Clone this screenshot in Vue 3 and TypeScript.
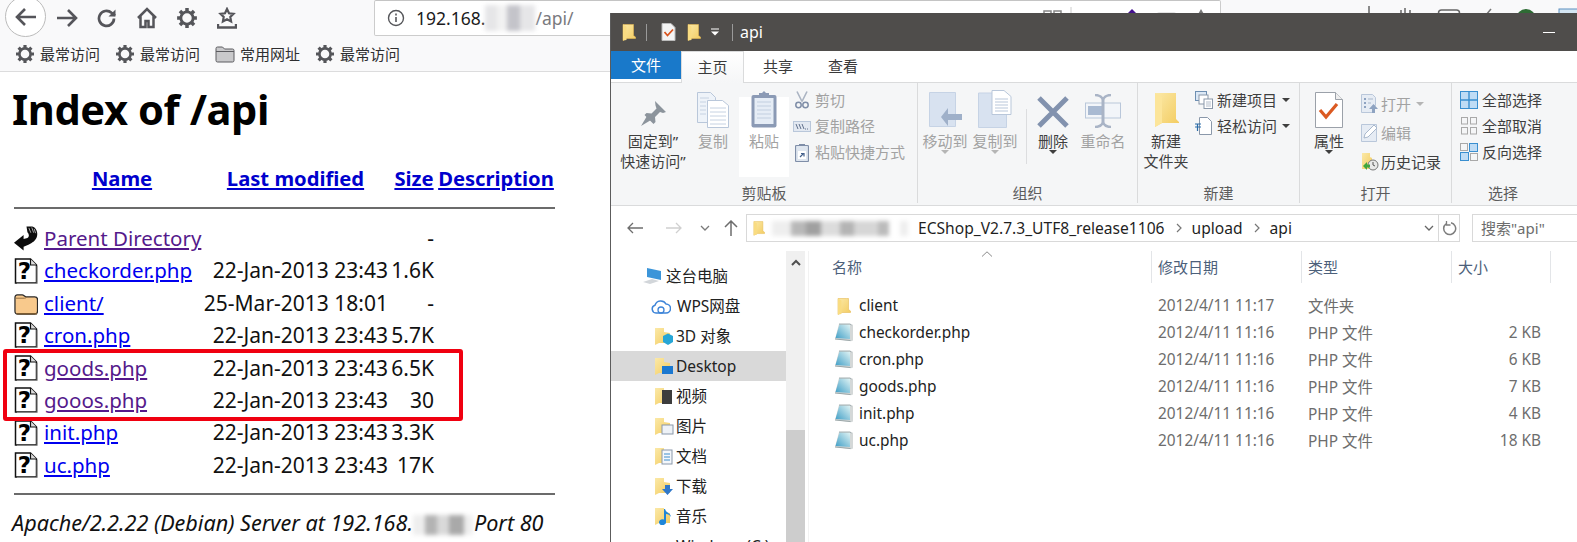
<script setup lang="ts">
interface Row { icon: string; name: string; date: string; size: string; visited?: boolean }
const rows: Row[] = [
  { icon: 'back', name: 'Parent Directory', date: '', size: '-', visited: true },
  { icon: 'unk', name: 'checkorder.php', date: '22-Jan-2013 23:43', size: '1.6K' },
  { icon: 'dir', name: 'client/', date: '25-Mar-2013 18:01', size: '-' },
  { icon: 'unk', name: 'cron.php', date: '22-Jan-2013 23:43', size: '5.7K' },
  { icon: 'unk', name: 'goods.php', date: '22-Jan-2013 23:43', size: '6.5K', visited: true },
  { icon: 'unk', name: 'gooos.php', date: '22-Jan-2013 23:43', size: '30', visited: true },
  { icon: 'unk', name: 'init.php', date: '22-Jan-2013 23:43', size: '3.3K' },
  { icon: 'unk', name: 'uc.php', date: '22-Jan-2013 23:43', size: '17K' },
]
const bookmarks = [
  { icon: 'gear', label: '最常访问' },
  { icon: 'gear', label: '最常访问' },
  { icon: 'bfolder', label: '常用网址' },
  { icon: 'gear', label: '最常访问' },
]
const tree = [
  { label: '这台电脑', kind: 'pc' },
  { label: 'WPS网盘', kind: 'cloud' },
  { label: '3D 对象', kind: 'cube' },
  { label: 'Desktop', kind: 'desk', selected: true },
  { label: '视频', kind: 'film' },
  { label: '图片', kind: 'pic' },
  { label: '文档', kind: 'doc' },
  { label: '下载', kind: 'down' },
  { label: '音乐', kind: 'music' },
  { label: 'Windows (C:)', kind: 'drive' },
]
const files = [
  { name: 'client', date: '2012/4/11 11:17', type: '文件夹', size: '', dir: true },
  { name: 'checkorder.php', date: '2012/4/11 11:16', type: 'PHP 文件', size: '2 KB' },
  { name: 'cron.php', date: '2012/4/11 11:16', type: 'PHP 文件', size: '6 KB' },
  { name: 'goods.php', date: '2012/4/11 11:16', type: 'PHP 文件', size: '7 KB' },
  { name: 'init.php', date: '2012/4/11 11:16', type: 'PHP 文件', size: '4 KB' },
  { name: 'uc.php', date: '2012/4/11 11:16', type: 'PHP 文件', size: '18 KB' },
]
</script>

<template>
  <div class="scene">
    <svg class="defs" width="0" height="0">
      <defs>
        <linearGradient id="gFolder" x1="0" y1="0" x2="1" y2="1">
          <stop offset="0" stop-color="#fbe9a8" />
          <stop offset="1" stop-color="#f3cb5e" />
        </linearGradient>
        <linearGradient id="gPhp" x1="0" y1="1" x2="1" y2="0">
          <stop offset="0" stop-color="#3f9ec6" />
          <stop offset="1" stop-color="#dff3f4" />
        </linearGradient>
        <symbol id="gear" viewBox="0 0 20 20">
          <g stroke="#55565a" stroke-width="3.2" stroke-linecap="butt">
            <path d="M10 1v18M1 10h18M3.6 3.6l12.8 12.8M16.4 3.6L3.6 16.4" />
          </g>
          <circle cx="10" cy="10" r="5.6" fill="#f9f9fa" stroke="#55565a" stroke-width="2.6" />
        </symbol>
        <symbol id="bfolder" viewBox="0 0 20 20">
          <path d="M1 4.5a1.5 1.5 0 0 1 1.5-1.5h5l2 2h8a1.5 1.5 0 0 1 1.5 1.5v10a1.5 1.5 0 0 1-1.5 1.5h-15A1.5 1.5 0 0 1 1 16.500z" fill="#c9c9cb" stroke="#5c5c60" stroke-width="1" />
          <path d="M1 7.500h18" stroke="#5c5c60" stroke-width="1" />
        </symbol>
        <symbol id="unk" viewBox="0 0 23 26">
          <path d="M1 1h15l6 6v18H1z" fill="#fff" stroke="#111" stroke-width="1.500" />
          <path d="M16 1v6h6" fill="#ddd" stroke="#111" stroke-width="1.200" />
          <path d="M2.500 25.500h20V8" fill="none" stroke="#888" stroke-width="1" />
          <text x="10" y="21" text-anchor="middle" class="q">?</text>
        </symbol>
        <symbol id="back" viewBox="0 0 25 26">
          <path d="M13 1l6 0c4 1 6 6 5 10-1 5-5 7-9 9l-5 2v4L0 18l10-8v4l4-1c2-1 2-4 0-6z" fill="#0c0c0c" />
          <path d="M15.500 2.500l2 5M18.500 2l2 5.500M21 3.500l1.500 4.500" stroke="#aaa" stroke-width="1" fill="none" />
        </symbol>
        <symbol id="dir" viewBox="0 0 25 26">
          <path d="M1 7.500c0-2 1-3 2.500-3h5c2 0 2 2 4 2h9c2 0 3 1 3 3v12c0 2-1 3-3 3H4c-2 0-3-1-3-3z" fill="#f8c98c" stroke="#2b2b2b" stroke-width="1.300" />
          <path d="M2 23.500h22v1.500H3z" fill="#7a5a30" />
          <path d="M2 8h9c1 0 2-.5 2-1.500" fill="none" stroke="#8f6a3a" stroke-width="1" />
        </symbol>
        <symbol id="efolder" viewBox="0 0 14 18">
          <path d="M1 1.500h8.500l2 0v11l2 1.500v1.500H4.500L1 17.500z" fill="url(#gFolder)" stroke="#e6bb55" stroke-width=".6" />
          <path d="M1 1.500l3.500 2v13.500l-3.500 .500z" fill="#f9dc82" />
        </symbol>
        <symbol id="php" viewBox="0 0 20 19">
          <path d="M5 1h11l3 .8v15.700l-2 .8L1 16z" fill="#d4d8d8" />
          <path d="M5.500 1.500h10.500l0 14.500L1.500 15z" fill="url(#gPhp)" />
          <path d="M5 1h11l1.500 1" stroke="#8d9ca0" stroke-width=".8" fill="none" />
          <path d="M1 16l15.500 1.500" stroke="#9aa6a8" stroke-width="1" />
        </symbol>
        <symbol id="sel" viewBox="0 0 18 18">
          <rect x=".5" y=".5" width="17" height="17" fill="#bfdcf5" stroke="#3a8fd0" />
          <path d="M9 .5v17M.5 9h17" stroke="#3a8fd0" stroke-width="1.400" />
        </symbol>
        <symbol id="none" viewBox="0 0 18 18">
          <g fill="none" stroke="#a9a9a9"><rect x="1.500" y=".5" width="6" height="6.500" /><rect x="10.500" y=".5" width="6" height="6.500" /><rect x="1.500" y="10.500" width="6" height="6.500" /><rect x="10.500" y="10.500" width="6" height="6.500" /></g>
        </symbol>
        <symbol id="inv" viewBox="0 0 18 18">
          <g fill="none" stroke="#a9a9a9"><rect x=".5" y=".5" width="7" height="7" /><rect x="10.500" y="10.500" width="7" height="7" /></g>
          <g fill="#bfdcf5" stroke="#3a8fd0"><rect x="9.500" y=".5" width="8" height="8" /><rect x=".5" y="9.500" width="8" height="8" /></g>
        </symbol>
      </defs>
    </svg>

    <div class="browser">
      <div class="chrome">
        <div class="navbar">
          <button class="circle" aria-label="back">
            <svg width="22" height="20" viewBox="0 0 22 20"><path d="M21 10H2M10 2l-8 8 8 8" fill="none" stroke="#55555a" stroke-width="2.600" /></svg>
          </button>
          <svg class="tool" width="22" height="20" viewBox="0 0 22 20"><path d="M1 10h19M12 2l8 8-8 8" fill="none" stroke="#55555a" stroke-width="2.600" /></svg>
          <svg class="tool" width="20" height="20" viewBox="0 0 20 20"><path d="M17 10.500a7.500 7.500 0 1 1-2.500-5.700L18 7.500" fill="none" stroke="#55555a" stroke-width="2.700" /><path d="M18.500 1.500v7h-7z" fill="#55555a" /></svg>
          <svg class="tool" width="22" height="22" viewBox="0 0 22 22"><path d="M2 11l9-9 9 9M4.500 9v11h5v-6h3v6h5V9" fill="none" stroke="#55555a" stroke-width="2.500" /></svg>
          <svg class="tool" width="22" height="22"><use href="#gear" /></svg>
          <svg class="tool" width="20" height="22" viewBox="0 0 20 22"><path d="M10 2l2 4.300 4.500.6-3.200 3.100.8 4.500-4.100-2.200-4.100 2.200.8-4.500L3.500 6.900 8 6.300z" fill="none" stroke="#55555a" stroke-width="2.200" /><path d="M1 17v3.500h18V17" fill="none" stroke="#55555a" stroke-width="2.400" /></svg>
          <div class="urlbar">
            <svg width="18" height="18" viewBox="0 0 18 18"><circle cx="9" cy="9" r="7.500" fill="none" stroke="#55565a" stroke-width="1.400" /><path d="M9 8v5M9 4.500v2" stroke="#55565a" stroke-width="1.600" /></svg>
            <span class="addr"><b>192.168.</b><i class="smudge s-url"></i>/api/</span>
            <svg class="tail" width="190" height="36" viewBox="1030 0 190 36"><rect x="1044" y="10" width="7" height="6" fill="none" stroke="#888" stroke-width="1.500" /><rect x="1054" y="10" width="7" height="6" fill="none" stroke="#888" stroke-width="1.500" /><path d="M1071 6v20" stroke="#ccc" /><path d="M1132 8l-7 7h14z" fill="#45128f" /><rect x="1157" y="11" width="19" height="8" rx="2" fill="#e4e4e4" /><path d="M1201 8l-4 7h8z" fill="#777" /></svg>
          </div>
          <svg class="tail2" width="210" height="36" viewBox="1367 0 210 36"><path d="M1368 6v12M1362 12" stroke="#666" stroke-width="1.500" /><path d="M1400 10v6M1404 8v8M1409 10v6" stroke="#666" stroke-width="1.500" /><rect x="1437.500" y="10" width="21" height="14" rx="3" fill="none" stroke="#666" stroke-width="1.500" /><path d="M1490 9l-5 6" stroke="#777" stroke-width="1.500" /><circle cx="1525" cy="19" r="10" fill="#2e6b34" /><rect x="1558" y="9" width="20" height="16" fill="#d5e6f3" stroke="#5d90c0" /></svg>
        </div>
        <div class="bookbar">
          <span v-for="(b, i) in bookmarks" :key="i" class="bm">
            <svg width="20" height="20"><use :href="'#' + b.icon" /></svg>{{ b.label }}
          </span>
        </div>
      </div>

      <div class="page">
        <h1>Index of /api</h1>
        <div class="listing">
          <span></span>
          <a class="th">Name</a>
          <a class="th">Last modified</a>
          <a class="th">Size</a>
          <a class="th">Description</a>
          <hr class="rule" />
          <template v-for="r in rows" :key="r.name">
            <svg class="ficon" width="24" height="26"><use :href="'#' + r.icon" /></svg>
            <span class="cell"><a class="lnk" :class="{ vis: r.visited }">{{ r.name }}</a></span>
            <span class="cell date">{{ r.date }}</span>
            <span class="cell size">{{ r.size }}</span>
            <span></span>
          </template>
          <hr class="rule last" />
        </div>
        <address>Apache/2.2.22 (Debian) Server at 192.168.<i class="smudge s-foot"></i>Port 80</address>
      </div>
      <div class="redbox"></div>
    </div>

    <section class="explorer">
      <header class="titlebar">
        <svg width="14" height="18"><use href="#efolder" /></svg>
        <i class="tsep s1"></i>
        <svg class="t-check" width="15" height="18" viewBox="0 0 15 18"><path d="M1 .5h9l4 4v13H1z" fill="#f4f4f4" stroke="#bbb" /><path d="M3.500 9l3 3.500 5.500-6" fill="none" stroke="#d9541e" stroke-width="1.800" /></svg>
        <svg class="t-f2" width="14" height="18"><use href="#efolder" /></svg>
        <svg class="t-drop" width="8" height="8" viewBox="0 0 8 8"><path d="M0 1h8" stroke="#fff" /><path d="M0 3.500h8L4 7.500z" fill="#fff" /></svg>
        <i class="tsep s2"></i>
        <span class="t-name">api</span>
        <i class="t-min"></i>
      </header>

      <nav class="tabs">
        <span class="tab file">文件</span>
        <span class="tab home">主页</span>
        <span class="tab share">共享</span>
        <span class="tab view">查看</span>
      </nav>

      <div class="ribbon">
        <div class="group">
          <div class="gbody">
            <div class="big w84">
              <div class="slot"><svg width="28" height="28" viewBox="0 0 28 28"><path d="M16 1l11 11-3 1-3-1-5 5 .5 5-2 2-9-9 2-2 5 .5 5-5-1-3z" fill="#8c949c" /><path d="M8 16l-6 10 10-6z" fill="#8c949c" /></svg></div>
              <span class="lb dark">固定到”<br />快速访问”</span>
            </div>
            <div class="big w36">
              <div class="slot"><svg width="32" height="36" viewBox="0 0 32 36"><path d="M.5.500h13l5 5v25H.5z" fill="#eef3f9" stroke="#b9c7da" /><path d="M10.500 8.500h15l6 5v22h-21z" fill="#fff" stroke="#b9c7da" /><path d="M3 6h9M3 10h6M3 14h6M3 18h6M3 22h6M13 16h16M13 20h16M13 24h16M13 28h16M13 32h16" stroke="#c6d2e2" /></svg></div>
              <span class="lb">复制</span>
            </div>
            <div class="big paste">
              <div class="slot"><svg width="26" height="37" viewBox="0 0 26 37"><rect x=".5" y="4" width="25" height="32.500" rx="2" fill="#8b9ab5" /><rect x="3.500" y="7" width="19" height="26" fill="#e6edf6" /><path d="M6 11h14M6 15h14M6 19h14M6 23h14M6 27h14" stroke="#c2cfe0" /><path d="M8 4h10V2h-3l-2-2-2 2H8z" fill="#8b9ab5" /></svg></div>
              <span class="lb">粘贴</span>
            </div>
            <div class="smalls c1">
              <div class="sm"><span class="sic"><svg width="14" height="18" viewBox="0 0 14 18"><path d="M2 .5l5 10M12 .5L7 10.500" stroke="#aab3c2" stroke-width="1.600" fill="none" /><circle cx="3.500" cy="14" r="2.700" fill="none" stroke="#7f8ea8" stroke-width="1.500" /><circle cx="10.500" cy="14" r="2.700" fill="none" stroke="#7f8ea8" stroke-width="1.500" /></svg></span><span class="lb">剪切</span></div>
              <div class="sm"><span class="sic"><svg width="18" height="11" viewBox="0 0 18 11"><rect x=".5" y=".5" width="17" height="10" fill="#e2e8f1" stroke="#b9c7da" /><path d="M3 3l2 5M6 3l2 5M9 3l2 5" stroke="#60708c" /><path d="M12 8h1M14 8h1" stroke="#60708c" /></svg></span><span class="lb">复制路径</span></div>
              <div class="sm"><span class="sic"><svg width="14" height="19" viewBox="0 0 14 19"><rect x=".5" y="2.500" width="13" height="16" rx="1" fill="#dfe6ef" stroke="#7f8ea8" stroke-width="1.200" /><path d="M4 3h6V1H4z" fill="#7f8ea8" /><rect x="3" y="8" width="8" height="8" fill="#fff" /><path d="M5 14l3-3M6 10.500h3v3" stroke="#43608c" stroke-width="1.200" fill="none" /></svg></span><span class="lb">粘贴快捷方式</span></div>
            </div>
          </div>
          <div class="gname">剪贴板</div>
        </div>

        <div class="group">
          <div class="gbody">
            <div class="big w48 m4">
              <div class="slot"><svg width="33" height="36" viewBox="0 0 33 36"><path d="M.5.500h26v34H.5z" fill="#d8e2f0" stroke="#c6d3e5" /><path d="M33 22H19v-6L12 25l7 9v-6h14z" fill="#9fb0c9" /></svg></div>
              <span class="lb">移动到</span><i class="caret lite"></i>
            </div>
            <div class="big w48 m2">
              <div class="slot"><svg width="34" height="38" viewBox="0 0 34 38"><path d="M.5 3h28v34.500H.5z" fill="#d8e2f0" stroke="#c6d3e5" /><path d="M14 .5h12l7 6v18H14z" fill="#fff" stroke="#b9c7da" /><path d="M17 9h13M17 12h13M17 15h13M17 18h13M17 21h13" stroke="#b9c7da" /></svg></div>
              <span class="lb">复制到</span><i class="caret lite"></i>
            </div>
            <i class="vsep"></i>
            <div class="big w50 m1">
              <div class="slot"><svg width="32" height="32" viewBox="0 0 32 32"><path d="M2 2l28 28M30 2L2 30" stroke="#8292ae" stroke-width="5" /></svg></div>
              <span class="lb dark">删除</span><i class="caret"></i>
            </div>
            <div class="big w50">
              <div class="slot"><svg width="36" height="34" viewBox="0 0 36 34"><rect x=".5" y="9" width="35" height="15" fill="#f2f5f9" stroke="#b9c7da" /><rect x="3" y="12" width="14" height="9" fill="#a9bad2" /><path d="M18 4v26" stroke="#a9b4c6" stroke-width="3" /><path d="M10 1c4 0 6 1 8 4 2-3 4-4 8-4M10 33c4 0 6-1 8-4 2 3 4 4 8 4" fill="none" stroke="#a9b4c6" stroke-width="2.500" /></svg></div>
              <span class="lb">重命名</span>
            </div>
          </div>
          <div class="gname">组织</div>
        </div>

        <div class="group">
          <div class="gbody">
            <div class="big w56">
              <div class="slot"><svg width="25" height="36" viewBox="0 0 25 36"><path d="M1 1h21v26l3 3v1H8l-7 4z" fill="url(#gFolder)" /><path d="M1 1l7 4v26l-7 4z" fill="#fce59a" /></svg></div>
              <span class="lb dark">新建<br />文件夹</span>
            </div>
            <div class="smalls c2">
              <div class="sm"><span class="sic"><svg width="18" height="18" viewBox="0 0 18 18"><rect x=".5" y=".5" width="11" height="9" fill="#dce8f5" stroke="#6e8fb2" /><rect x="4" y="4" width="9" height="9" fill="#fff" stroke="#8a98aa" /><rect x="9" y="8" width="8.500" height="9.500" fill="#fff" stroke="#8a98aa" /><path d="M11 11h5M11 13h5M11 15h5" stroke="#b3bdca" /></svg></span><span class="lb dark">新建项目</span><i class="caret side"></i></div>
              <div class="sm"><span class="sic"><svg width="17" height="18" viewBox="0 0 17 18"><path d="M4.500.5h8l4 4v13h-12z" fill="#fff" stroke="#8a98aa" /><path d="M0 7h6M0 10h6M2.500 7v7" stroke="#2b6ca8" stroke-width="1.200" /></svg></span><span class="lb dark">轻松访问</span><i class="caret side"></i></div>
            </div>
          </div>
          <div class="gname">新建</div>
        </div>

        <div class="group">
          <div class="gbody">
            <div class="big w58">
              <div class="slot"><svg width="28" height="36" viewBox="0 0 28 36"><path d="M.5.500h20l7 7v28H.5z" fill="#fff" stroke="#9ba1a9" /><path d="M20.500.5v7h7" fill="#eee" stroke="#9ba1a9" /><path d="M5 18l6 7 11-13" fill="none" stroke="#db5a22" stroke-width="3.200" /></svg></div>
              <span class="lb dark">属性</span><i class="caret"></i>
            </div>
            <div class="smalls c3">
              <div class="sm tall"><span class="sic"><svg width="17" height="19" viewBox="0 0 17 19"><path d="M.5.500h11l3 3v8H12v7H.5z" fill="#e6ecf4" stroke="#b9c7da" /><path d="M3 4h2v2H3zM3 8h2v2H3zM3 12h2v2H3z" fill="#8ea3c1" /><path d="M7 5h5M7 9h3" stroke="#a9b8cc" /><path d="M8 15l4.500-5 4.500 5h-3v4h-3v-4z" fill="#8ea3c1" /></svg></span><span class="lb">打开</span><i class="caret side lite"></i></div>
              <div class="sm tall"><span class="sic"><svg width="17" height="19" viewBox="0 0 17 19"><path d="M.5 1.500h15v17H.5z" fill="#e6ecf4" stroke="#b9c7da" /><path d="M3 15l1-4 9-9 3 3-9 9z" fill="#fff" stroke="#a9b8cc" /></svg></span><span class="lb">编辑</span></div>
              <div class="sm tall"><span class="sic"><svg width="18" height="19" viewBox="0 0 18 19"><path d="M1 1h8v4l2 1v11H1z" fill="url(#gFolder)" /><circle cx="12" cy="13" r="5" fill="#e9e9e9" stroke="#777" /><path d="M12 10v3l2 1" stroke="#555" fill="none" /><path d="M2 14l4-4v2.500h3v3H6V18z" fill="#3fa63c" /></svg></span><span class="lb dark">历史记录</span></div>
            </div>
          </div>
          <div class="gname">打开</div>
        </div>

        <div class="group">
          <div class="gbody">
            <div class="smalls c4">
              <div class="sm"><span class="sic"><svg width="18" height="18"><use href="#sel" /></svg></span><span class="lb dark">全部选择</span></div>
              <div class="sm"><span class="sic"><svg width="18" height="18"><use href="#none" /></svg></span><span class="lb dark">全部取消</span></div>
              <div class="sm"><span class="sic"><svg width="18" height="18"><use href="#inv" /></svg></span><span class="lb dark">反向选择</span></div>
            </div>
          </div>
          <div class="gname">选择</div>
        </div>
      </div>

      <div class="pathrow">
        <svg class="p-back" width="16" height="12" viewBox="0 0 16 12"><path d="M16 6H1M6 1L1 6l5 5" fill="none" stroke="#6d6d6d" stroke-width="1.300" /></svg>
        <svg class="p-fwd" width="16" height="12" viewBox="0 0 16 12"><path d="M0 6h15M10 1l5 5-5 5" fill="none" stroke="#d0d0d0" stroke-width="1.300" /></svg>
        <svg class="p-down" width="10" height="6" viewBox="0 0 10 6"><path d="M1 1l4 4 4-4" fill="none" stroke="#7a7a7a" stroke-width="1.300" /></svg>
        <svg class="p-up" width="14" height="16" viewBox="0 0 14 16"><path d="M7 16V1M1 7l6-6 6 6" fill="none" stroke="#6d6d6d" stroke-width="1.500" /></svg>
        <div class="address">
          <svg class="a-f" width="12" height="16"><use href="#efolder" /></svg>
          <i class="smudge s-path"></i>
          <span class="crumb">ECShop_V2.7.3_UTF8_release1106</span>
          <svg class="chev" width="6" height="10" viewBox="0 0 6 10"><path d="M1 1l4 4-4 4" fill="none" stroke="#777" stroke-width="1.200" /></svg>
          <span class="crumb">upload</span>
          <svg class="chev" width="6" height="10" viewBox="0 0 6 10"><path d="M1 1l4 4-4 4" fill="none" stroke="#777" stroke-width="1.200" /></svg>
          <span class="crumb">api</span>
          <svg class="a-drop" width="10" height="6" viewBox="0 0 10 6"><path d="M1 1l4 4 4-4" fill="none" stroke="#666" stroke-width="1.300" /></svg>
          <span class="a-ref"><svg width="15" height="15" viewBox="0 0 15 15"><path d="M4 2.800a6 6 0 1 0 5-1.100" fill="none" stroke="#7d7d7d" stroke-width="1.500" /><path d="M4.500 0v4h4" fill="none" stroke="#7d7d7d" stroke-width="1.300" /></svg></span>
        </div>
        <div class="search">搜索"api"</div>
      </div>

      <div class="body">
        <aside class="tree">
          <div v-for="t in tree" :key="t.label" class="node" :class="[t.kind, { on: t.selected }]">
            <svg class="nic" width="20" height="18" viewBox="0 0 20 18">
              <template v-if="t.kind === 'pc'">
                <path d="M5 1l14 3v9l-14-3z" fill="#3b95d9" />
                <path d="M1 15l9-3 7 2-9 3z" fill="#d2d6da" />
              </template>
              <template v-else-if="t.kind === 'cloud'">
                <path d="M5 16a4 4 0 0 1-1-7.800A6 6 0 0 1 15 7a4.500 4.500 0 0 1 0 9z" fill="#fff" stroke="#3d84d8" stroke-width="1.500" />
                <circle cx="10" cy="13" r="3" fill="none" stroke="#3d84d8" stroke-width="1.300" />
              </template>
              <template v-else-if="t.kind === 'drive'">
                <rect x="2" y="8" width="16" height="10" fill="#9ad0ea" />
              </template>
              <template v-else>
                <path d="M1 1h9v4l6 1v10H5l-4 2z" fill="url(#gFolder)" />
                <path v-if="t.kind === 'cube'" d="M9 9l5-2.500 5 2.500v6l-5 3-5-3z" fill="#27a6d6" />
                <rect v-if="t.kind === 'desk'" x="8" y="9" width="11" height="8" fill="#1b78d0" />
                <rect v-if="t.kind === 'film'" x="8" y="3" width="10" height="14" fill="#3d3d3d" />
                <rect v-if="t.kind === 'pic'" x="8" y="8" width="11" height="9" fill="#eef2f7" stroke="#8a98aa" />
                <g v-if="t.kind === 'doc'"><rect x="8" y="3" width="10" height="14" fill="#f4f7fb" stroke="#8a98aa" /><path d="M10 7h6M10 10h6M10 13h6" stroke="#3f8ecb" /></g>
                <path v-if="t.kind === 'down'" d="M11 8h5v4h3l-5.500 6L8 12h3z" fill="#3078c9" />
                <path v-if="t.kind === 'music'" d="M10 2l1 0c1 4 6 4 6 8-1-2-3-3-5-3v8a3.500 3 0 1 1-2-2.500z" fill="#1f86d8" />
              </template>
            </svg>
            <span>{{ t.label }}</span>
          </div>
        </aside>
        <div class="scroll">
          <svg class="sc-up" width="10" height="7" viewBox="0 0 10 7"><path d="M1 6l4-4 4 4" fill="none" stroke="#505050" stroke-width="2" /></svg>
          <div class="thumb"></div>
        </div>
        <div class="list">
          <div class="sort"><svg width="10" height="6" viewBox="0 0 10 6"><path d="M0 5.500L5 .8l5 4.700" fill="none" stroke="#8a8a8a" /></svg></div>
          <div class="cols">
            <span>名称</span><span>修改日期</span><span>类型</span><span>大小</span>
          </div>
          <div v-for="f in files" :key="f.name" class="frow">
            <span class="fname">
              <svg v-if="f.dir" class="fdir" width="14" height="18"><use href="#efolder" /></svg>
              <svg v-else width="20" height="19"><use href="#php" /></svg>
              {{ f.name }}
            </span>
            <span class="muted">{{ f.date }}</span>
            <span class="muted">{{ f.type }}</span>
            <span class="muted fsize">{{ f.size }}</span>
          </div>
        </div>
      </div>
    </section>
  </div>
</template>

<style>
html, body { margin: 0; background: #fff; }
</style>

<style scoped>
.scene {
  position: relative;
  width: 1577px;
  height: 542px;
  overflow: hidden;
  background: #fff;
  font-family: "Noto Sans", "Noto Sans CJK SC", sans-serif;
}
.defs { display: block; position: absolute; }
.q { font: 900 23px "DejaVu Sans", sans-serif; fill: #000; }

/* browser */
.browser { display: flex; flex-direction: column; height: 100%; }
.chrome { height: 71px; background: #f9f9fa; border-bottom: 1px solid #dcdcdd; flex: none; }
.navbar { display: flex; align-items: center; height: 36px; position: relative; }
.circle {
  width: 41px; height: 41px; margin: -4px 0 -1px 5px; flex: none;
  border: 1px solid #bbb; border-radius: 50%; background: #fff; padding: 0;
  display: flex; align-items: center; justify-content: center; box-sizing: border-box;
}
.tool { margin-left: 0; flex: none; }
.navbar .tool:nth-child(2) { margin-left: 10px; }
.navbar .tool:nth-child(3) { margin-left: 19px; }
.navbar .tool:nth-child(4) { margin-left: 19px; }
.navbar .tool:nth-child(5) { margin-left: 18px; }
.navbar .tool:nth-child(6) { margin-left: 19px; }
.urlbar {
  position: relative;
  margin-left: 137px; width: 847px; height: 36px; box-sizing: border-box; flex: none;
  background: #fff; border: 1px solid #ccc; border-top: 1px solid #c4c4c4; border-radius: 2px;
  display: flex; align-items: center; padding-left: 12px; overflow: hidden;
}
.addr { margin-left: 11px; font-size: 17.500px; color: #7a7a7e; display: flex; align-items: center; }
.addr b { font-weight: 400; color: #1b1b1d; }
.tail { position: absolute; right: 0; top: 0; }
.tail2 { margin-left: 147px; flex: none; }
.smudge { display: inline-block; font-style: normal; filter: blur(2px); }
.s-url { width: 50px; height: 26px; background: linear-gradient(90deg, #e6e6e8 0 25%, #f2f2f2 25% 45%, #c4c4ca 45% 70%, #e6e6e8 70%); }
.s-foot { width: 60px; height: 20px; margin: 0 1px 0 0; vertical-align: middle; background: linear-gradient(90deg, #eeeeee 0 20%, #b3b3b3 20% 40%, #d9d9d9 40% 60%, #a9a9a9 60% 85%, #efefef 85%); }
.s-path { width: 136px; height: 15px; margin-left: 7px; background: linear-gradient(90deg, #eee 0 14%, #b8b8b8 14% 25%, #a0a0a0 25% 36%, #dcdcdc 36% 50%, #b4b4b4 50% 60%, #d6d6d6 60% 78%, #bbb 78% 86%, #fff 86% 94%, #eee 94%); }
.bookbar { display: flex; height: 35px; align-items: center; padding-left: 15px; font-size: 15px; color: #2e2e30; }
.bm { display: flex; align-items: center; gap: 5px; width: 100px; line-height: 20px; }

/* page */
.page { flex: 1; padding: 0; position: relative; }
h1 { margin: 0; padding: 11px 0 0 12px; font-size: 41.600px; line-height: 52px; height: 52px; font-weight: 700; color: #000; letter-spacing: -.4px; }
.listing {
  margin: 27px 0 0 14px; width: 541px;
  display: grid; grid-template-columns: 30px 156px 191px 46px 118px;
  grid-template-rows: 32px 28px;
  grid-auto-rows: 32.400px; font-size: 21px; line-height: 32px; color: #111;
}
.th { font-weight: 700; color: #0000cd; text-decoration: underline; text-align: center; font-size: 20.200px; }
.rule { grid-column: 1 / -1; margin: 13px 0 0; height: 2px; border: 0; background: #6b6b6b; align-self: start; }
.rule.last { margin-top: 12px; }
.ficon { align-self: center; }
.cell { white-space: nowrap; }
.lnk { color: #0000ee; text-decoration: underline; text-underline-offset: 2px; font-size: 20.500px; }
.lnk.vis { color: #551a8b; }
.date { text-align: right; padding-right: 3px; }
.size { text-align: right; padding-right: 3px; }
address { margin: -6px 0 0 12px; font-size: 21.600px; line-height: 30px; font-style: italic; color: #111; white-space: nowrap; }
.redbox { position: absolute; left: 3px; top: 349px; width: 460px; height: 72px; box-sizing: border-box; border: 4px solid #f00010; border-radius: 3px; }

/* explorer */
.explorer {
  position: absolute; left: 610px; top: 13px; right: 0; bottom: 0;
  border-left: 1px solid #5c5c5c; background: #fff;
  display: flex; flex-direction: column; color: #3f3f3f; font-size: 15px;
}
.titlebar { height: 38px; flex: none; background: #4f4d4b; display: flex; align-items: center; padding-left: 11px; color: #fff; }
.tsep { width: 1px; height: 17px; background: #9a9a9a; flex: none; }
.s1 { margin-left: 10px; }
.t-check { margin-left: 14px; }
.t-f2 { margin-left: 11px; }
.t-drop { margin-left: 10px; }
.s2 { margin-left: 13px; }
.t-name { margin-left: 7px; font-size: 16px; }
.t-min { margin-left: auto; margin-right: 22px; width: 12px; height: 1px; background: #fff; }
.tabs { height: 31px; flex: none; display: flex; border-bottom: 1px solid #dadbdc; box-sizing: content-box; font-size: 15px; line-height: 30px; color: #3a3a3a; }
.tab { display: block; text-align: center; }
.file { width: 70px; background: #1979ca; color: #fff; height: 28px; line-height: 28px; }
.home { width: 63px; border: 1px solid #dadbdc; border-bottom: 0; box-sizing: border-box; margin-bottom: -1px; height: 32px; background: linear-gradient(#fff, #f5f6f7); }
.share { margin-left: 19px; }
.view { margin-left: 35px; }
.ribbon { height: 123px; flex: none; background: #f5f6f7; border-bottom: 1px solid #dadbdc; box-sizing: border-box; display: grid; grid-template-columns: 307px 220px 162px 152px 102px 1fr; }
.group { height: 120px; border-right: 1px solid #dadbdc; display: flex; flex-direction: column; box-sizing: border-box; }
.group:last-child { border: 0; }
.gbody { height: 100px; display: flex; }
.gname { height: 20px; line-height: 20px; text-align: center; color: #5c5c5c; font-size: 15px; }
.big { display: flex; flex-direction: column; align-items: center; flex: none; }
.slot { height: 48px; width: 100%; display: flex; align-items: flex-end; justify-content: center; padding-bottom: 3px; box-sizing: border-box; }
.lb { color: #a2a2a2; font-size: 15px; line-height: 20px; white-space: nowrap; text-align: center; }
.lb.dark { color: #3f3f3f; }
.w84 { width: 84px; } .w36 { width: 36px; } .w48 { width: 48px; } .w50 { width: 50px; } .w56 { width: 56px; } .w58 { width: 58px; }
.m4 { margin-left: 3px; } .m2 { margin-left: 2px; } .m1 { margin-left: 1px; }
.paste { width: 50px; height: 94px; margin-left: 8px; background: linear-gradient(#f5f6f7 14px, #fff 14px); }
.vsep { width: 1px; height: 55px; margin: 26px 0 0 7px; background: #dcdddf; flex: none; }
.caret { display: block; width: 0; height: 0; border: 4px solid transparent; border-top-color: #3f3f3f; border-bottom: 0; margin-top: -1px; }
.caret.lite { border-top-color: #b5b5b5; }
.caret.side { margin: 0 0 0 5px; }
.smalls { flex: none; padding-top: 4px; display: flex; flex-direction: column; }
.sm { display: flex; align-items: center; height: 26px; }
.sm.tall { height: 29px; }
.sic { width: 22px; flex: none; display: flex; align-items: center; }
.c1 { margin-left: 4px; }
.c1 .sm:nth-child(1) .sic, .c1 .sm:nth-child(3) .sic { padding-left: 2px; width: 20px; }
.c2 { margin-left: 1px; }
.c3 { margin-left: 3px; padding-top: 6px; }
.c3 .sic { width: 20px; }
.c4 { margin-left: 8px; }

.pathrow { height: 39px; flex: none; display: flex; align-items: center; padding-top: 5px; padding-bottom: 0; box-sizing: border-box; }
.p-back { margin-left: 16px; }
.p-fwd { margin-left: 23px; }
.p-down { margin-left: 18px; }
.p-up { margin-left: 14px; }
.address { margin-left: 8px; width: 714px; height: 28px; box-sizing: border-box; border: 1px solid #d9d9d9; display: flex; align-items: center; padding-left: 6px; flex: none; }
.crumb { color: #1f1f1f; font-size: 15.600px; line-height: 26px; white-space: nowrap; }
.a-f { flex: none; }
.s-path + .crumb { margin-left: 10px; }
.chev { margin: 0 10px 0 11px; flex: none; }
.a-drop { margin-left: auto; margin-right: 4px; }
.a-ref { width: 20px; height: 26px; border-left: 1px solid #d9d9d9; display: flex; align-items: center; justify-content: center; }
.search { margin-left: 12px; flex: 1; height: 28px; box-sizing: border-box; border: 1px solid #d9d9d9; border-right: 0; padding-left: 8px; font-size: 15px; line-height: 26px; color: #6d6d6d; }

.body { flex: 1; display: flex; padding-top: 6px; min-height: 0; overflow: hidden; }
.tree { width: 175px; flex: none; padding-top: 10px; }
.node { height: 30px; box-sizing: border-box; padding-bottom: 1px; display: flex; align-items: center; padding-left: 43px; font-size: 15.500px; color: #222; white-space: nowrap; }
.node.pc { padding-left: 31px; }
.node.pc .nic { margin-right: 4px; }
.node.cloud { padding-left: 40px; }
.node.cloud .nic { margin-right: 6px; }
.nic { margin-right: 2px; flex: none; }
.node.on { background: #d9d9d9; }
.scroll { width: 19px; flex: none; background: #f0f0f0; display: flex; flex-direction: column; align-items: center; padding-top: 8px; box-sizing: border-box; }
.thumb { margin-top: 164px; width: 100%; flex: 1; background: #cdcdcd; }
.list { flex: 1; position: relative; margin-left: 3px; border-left: 1px solid #f2f2f2; }
.sort { position: absolute; left: 173px; top: 0; height: 6px; line-height: 0; }
.cols { display: grid; grid-template-columns: 342px 150px 150px 100px; height: 32px; line-height: 32px; color: #4c607a; font-size: 15px; }
.cols span { padding-left: 6px; border-left: 1px solid #e3e5e8; }
.cols span:first-child { padding-left: 23px; border: 0; }
.cols span:last-child { border-right: 1px solid #e3e5e8; }
.frow { display: grid; grid-template-columns: 342px 150px 150px 90px; height: 27px; align-items: center; font-size: 15.400px; color: #222; white-space: nowrap; }
.frow:nth-child(3) { margin-top: 9px; }
.fname { display: flex; align-items: center; padding-left: 25px; gap: 5px; }
.fdir { margin: 0 3px 0 3px; }
.muted { color: #6d6d6d; padding-left: 7px; }
.fsize { text-align: right; padding: 0; }
</style>
